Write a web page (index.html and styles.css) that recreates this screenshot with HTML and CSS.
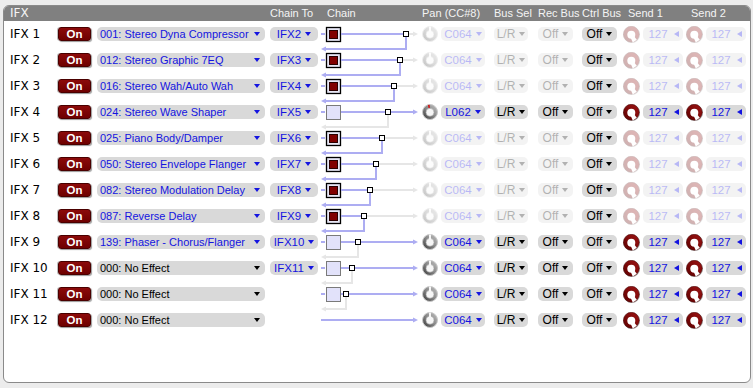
FILE: index.html
```html
<!DOCTYPE html>
<html>
<head>
<meta charset="utf-8">
<link rel="stylesheet" href="styles.css">
</head>
<body>
<svg class="defs" aria-hidden="true">
  <defs>
    <linearGradient id="pg" x1="1" y1="0" x2="0" y2="1">
      <stop offset="0" stop-color="#c4c4c4"/>
      <stop offset="0.5" stop-color="#888"/>
      <stop offset="1" stop-color="#333"/>
    </linearGradient>
    <linearGradient id="rg" x1="1" y1="0" x2="0" y2="1">
      <stop offset="0" stop-color="#a01414"/>
      <stop offset="1" stop-color="#5c0000"/>
    </linearGradient>
    <symbol id="pk" viewBox="0 0 16 16">
      <circle cx="8" cy="8" r="7.5" fill="url(#pg)" stroke="#c8c8c8" stroke-width="1"/>
      <circle cx="8" cy="8.3" r="4" fill="#f6f6f6" stroke="#a0a0a0" stroke-width=".6"/>
      <rect x="7.1" y="0.6" width="1.8" height="4.4" fill="#fff"/>
    </symbol>
    <symbol id="pkL" viewBox="0 0 16 16">
      <circle cx="8" cy="8" r="7.5" fill="url(#pg)" stroke="#c8c8c8" stroke-width="1"/>
      <circle cx="8" cy="8.3" r="4" fill="#f6f6f6" stroke="#a0a0a0" stroke-width=".6"/>
      <rect x="7" y="0.7" width="1.6" height="3.2" fill="#d41010" transform="rotate(-8 8 8)"/>
    </symbol>
    <symbol id="sk" viewBox="0 0 17 17">
      <circle cx="8.9" cy="8.9" r="8.1" fill="#bdbdbd"/>
      <circle cx="8.3" cy="8.3" r="8" fill="url(#rg)" stroke="#3a0000" stroke-width=".5"/>
      <circle cx="8.3" cy="8.7" r="4" fill="#fff"/>
      <path d="M6.8 9.8 L9.8 16.4 L13.8 13.8 L9.8 8.4 Z" fill="#fff"/>
    </symbol>
  </defs>
</svg>

<div class="panel">
  <div class="hdr">
    <span class="h-ifx">IFX</span>
    <span class="h-ct">Chain To</span>
    <span class="h-ch">Chain</span>
    <span class="h-pan">Pan (CC#8)</span>
    <span class="h-bus">Bus Sel</span>
    <span class="h-rec">Rec Bus</span>
    <span class="h-ctl">Ctrl Bus</span>
    <span class="h-s1">Send 1</span>
    <span class="h-s2">Send 2</span>
  </div>

  <!-- IFX 1 -->
  <div class="row">
    <span class="lbl">IFX 1</span>
    <span class="on">On</span>
    <span class="sel fx"><span>001: Stereo Dyna Compressor</span><i class="dn"></i></span>
    <span class="sel ct"><span>IFX2</span><i class="dn"></i></span>
    <svg class="chain" width="100" height="26" viewBox="0 0 100 26">
      <path d="M1 13H5" class="lv"/>
      <rect x="6.5" y="6.5" width="14" height="14" class="bxa"/><rect x="9.5" y="9.5" width="8" height="8" class="rd"/>
      <path d="M21 13H86" class="lv"/>
      <path d="M89 13H94" class="lt"/><path d="M93 10.5L98 13L93 15.5Z" class="ltf"/>
      <path d="M86 16V28H4" class="lv"/><path d="M6 25.5L1 28L6 30.5Z" class="lvf"/>
      <rect x="83.5" y="10.5" width="5" height="5" class="nd"/>
    </svg>
    <svg class="knob dis" viewBox="0 0 16 16"><use href="#pk" width="16" height="16"/></svg>
    <span class="sel pan dis"><span>C064</span><i class="dn"></i></span>
    <span class="sel bk bus dis"><span>L/R</span><i class="dn"></i></span>
    <span class="sel bk off dis"><span>Off</span><i class="dn"></i></span>
    <span class="sel bk off"><span>Off</span><i class="dn"></i></span>
    <svg class="sknob dis" viewBox="0 0 17 17"><use href="#sk" width="17" height="17"/></svg>
    <span class="sel val dis"><span>127</span><i class="lf"></i></span>
    <svg class="sknob dis" viewBox="0 0 17 17"><use href="#sk" width="17" height="17"/></svg>
    <span class="sel val dis"><span>127</span><i class="lf"></i></span>
  </div>

  <!-- IFX 2 -->
  <div class="row">
    <span class="lbl">IFX 2</span>
    <span class="on">On</span>
    <span class="sel fx"><span>012: Stereo Graphic 7EQ</span><i class="dn"></i></span>
    <span class="sel ct"><span>IFX3</span><i class="dn"></i></span>
    <svg class="chain" width="100" height="26" viewBox="0 0 100 26">
      <path d="M1 13H5" class="lv"/>
      <rect x="6.5" y="6.5" width="14" height="14" class="bxa"/><rect x="9.5" y="9.5" width="8" height="8" class="rd"/>
      <path d="M21 13H80" class="lv"/>
      <path d="M83 13H94" class="lt"/><path d="M93 10.5L98 13L93 15.5Z" class="ltf"/>
      <path d="M80 16V28H4" class="lv"/><path d="M6 25.5L1 28L6 30.5Z" class="lvf"/>
      <rect x="77.5" y="10.5" width="5" height="5" class="nd"/>
    </svg>
    <svg class="knob dis" viewBox="0 0 16 16"><use href="#pk" width="16" height="16"/></svg>
    <span class="sel pan dis"><span>C064</span><i class="dn"></i></span>
    <span class="sel bk bus dis"><span>L/R</span><i class="dn"></i></span>
    <span class="sel bk off dis"><span>Off</span><i class="dn"></i></span>
    <span class="sel bk off"><span>Off</span><i class="dn"></i></span>
    <svg class="sknob dis" viewBox="0 0 17 17"><use href="#sk" width="17" height="17"/></svg>
    <span class="sel val dis"><span>127</span><i class="lf"></i></span>
    <svg class="sknob dis" viewBox="0 0 17 17"><use href="#sk" width="17" height="17"/></svg>
    <span class="sel val dis"><span>127</span><i class="lf"></i></span>
  </div>

  <!-- IFX 3 -->
  <div class="row">
    <span class="lbl">IFX 3</span>
    <span class="on">On</span>
    <span class="sel fx"><span>016: Stereo Wah/Auto Wah</span><i class="dn"></i></span>
    <span class="sel ct"><span>IFX4</span><i class="dn"></i></span>
    <svg class="chain" width="100" height="26" viewBox="0 0 100 26">
      <path d="M1 13H5" class="lv"/>
      <rect x="6.5" y="6.5" width="14" height="14" class="bxa"/><rect x="9.5" y="9.5" width="8" height="8" class="rd"/>
      <path d="M21 13H74" class="lv"/>
      <path d="M77 13H94" class="lt"/><path d="M93 10.5L98 13L93 15.5Z" class="ltf"/>
      <path d="M74 16V28H4" class="lv"/><path d="M6 25.5L1 28L6 30.5Z" class="lvf"/>
      <rect x="71.5" y="10.5" width="5" height="5" class="nd"/>
    </svg>
    <svg class="knob dis" viewBox="0 0 16 16"><use href="#pk" width="16" height="16"/></svg>
    <span class="sel pan dis"><span>C064</span><i class="dn"></i></span>
    <span class="sel bk bus dis"><span>L/R</span><i class="dn"></i></span>
    <span class="sel bk off dis"><span>Off</span><i class="dn"></i></span>
    <span class="sel bk off"><span>Off</span><i class="dn"></i></span>
    <svg class="sknob dis" viewBox="0 0 17 17"><use href="#sk" width="17" height="17"/></svg>
    <span class="sel val dis"><span>127</span><i class="lf"></i></span>
    <svg class="sknob dis" viewBox="0 0 17 17"><use href="#sk" width="17" height="17"/></svg>
    <span class="sel val dis"><span>127</span><i class="lf"></i></span>
  </div>

  <!-- IFX 4 -->
  <div class="row">
    <span class="lbl">IFX 4</span>
    <span class="on">On</span>
    <span class="sel fx"><span>024: Stereo Wave Shaper</span><i class="dn"></i></span>
    <span class="sel ct"><span>IFX5</span><i class="dn"></i></span>
    <svg class="chain" width="100" height="26" viewBox="0 0 100 26">
      <path d="M1 13H5" class="lv"/>
      <rect x="6.5" y="6.5" width="14" height="14" class="bxi"/>
      <path d="M68 16V28H4" class="lt"/><path d="M6 25.5L1 28L6 30.5Z" class="ltf"/>
      <path d="M21 13H94" class="lv"/><path d="M93 10.5L98 13L93 15.5Z" class="lvf"/>
      <rect x="65.5" y="10.5" width="5" height="5" class="nd"/>
    </svg>
    <svg class="knob" viewBox="0 0 16 16"><use href="#pkL" width="16" height="16"/></svg>
    <span class="sel pan"><span>L062</span><i class="dn"></i></span>
    <span class="sel bk bus"><span>L/R</span><i class="dn"></i></span>
    <span class="sel bk off"><span>Off</span><i class="dn"></i></span>
    <span class="sel bk off"><span>Off</span><i class="dn"></i></span>
    <svg class="sknob" viewBox="0 0 17 17"><use href="#sk" width="17" height="17"/></svg>
    <span class="sel val"><span>127</span><i class="lf"></i></span>
    <svg class="sknob" viewBox="0 0 17 17"><use href="#sk" width="17" height="17"/></svg>
    <span class="sel val"><span>127</span><i class="lf"></i></span>
  </div>

  <!-- IFX 5 -->
  <div class="row">
    <span class="lbl">IFX 5</span>
    <span class="on">On</span>
    <span class="sel fx"><span>025: Piano Body/Damper</span><i class="dn"></i></span>
    <span class="sel ct"><span>IFX6</span><i class="dn"></i></span>
    <svg class="chain" width="100" height="26" viewBox="0 0 100 26">
      <path d="M1 13H5" class="lv"/>
      <rect x="6.5" y="6.5" width="14" height="14" class="bxa"/><rect x="9.5" y="9.5" width="8" height="8" class="rd"/>
      <path d="M21 13H62" class="lv"/>
      <path d="M65 13H94" class="lt"/><path d="M93 10.5L98 13L93 15.5Z" class="ltf"/>
      <path d="M62 16V28H4" class="lv"/><path d="M6 25.5L1 28L6 30.5Z" class="lvf"/>
      <rect x="59.5" y="10.5" width="5" height="5" class="nd"/>
    </svg>
    <svg class="knob dis" viewBox="0 0 16 16"><use href="#pk" width="16" height="16"/></svg>
    <span class="sel pan dis"><span>C064</span><i class="dn"></i></span>
    <span class="sel bk bus dis"><span>L/R</span><i class="dn"></i></span>
    <span class="sel bk off dis"><span>Off</span><i class="dn"></i></span>
    <span class="sel bk off"><span>Off</span><i class="dn"></i></span>
    <svg class="sknob dis" viewBox="0 0 17 17"><use href="#sk" width="17" height="17"/></svg>
    <span class="sel val dis"><span>127</span><i class="lf"></i></span>
    <svg class="sknob dis" viewBox="0 0 17 17"><use href="#sk" width="17" height="17"/></svg>
    <span class="sel val dis"><span>127</span><i class="lf"></i></span>
  </div>

  <!-- IFX 6 -->
  <div class="row">
    <span class="lbl">IFX 6</span>
    <span class="on">On</span>
    <span class="sel fx"><span>050: Stereo Envelope Flanger</span><i class="dn"></i></span>
    <span class="sel ct"><span>IFX7</span><i class="dn"></i></span>
    <svg class="chain" width="100" height="26" viewBox="0 0 100 26">
      <path d="M1 13H5" class="lv"/>
      <rect x="6.5" y="6.5" width="14" height="14" class="bxa"/><rect x="9.5" y="9.5" width="8" height="8" class="rd"/>
      <path d="M21 13H56" class="lv"/>
      <path d="M59 13H94" class="lt"/><path d="M93 10.5L98 13L93 15.5Z" class="ltf"/>
      <path d="M56 16V28H4" class="lv"/><path d="M6 25.5L1 28L6 30.5Z" class="lvf"/>
      <rect x="53.5" y="10.5" width="5" height="5" class="nd"/>
    </svg>
    <svg class="knob dis" viewBox="0 0 16 16"><use href="#pk" width="16" height="16"/></svg>
    <span class="sel pan dis"><span>C064</span><i class="dn"></i></span>
    <span class="sel bk bus dis"><span>L/R</span><i class="dn"></i></span>
    <span class="sel bk off dis"><span>Off</span><i class="dn"></i></span>
    <span class="sel bk off"><span>Off</span><i class="dn"></i></span>
    <svg class="sknob dis" viewBox="0 0 17 17"><use href="#sk" width="17" height="17"/></svg>
    <span class="sel val dis"><span>127</span><i class="lf"></i></span>
    <svg class="sknob dis" viewBox="0 0 17 17"><use href="#sk" width="17" height="17"/></svg>
    <span class="sel val dis"><span>127</span><i class="lf"></i></span>
  </div>

  <!-- IFX 7 -->
  <div class="row">
    <span class="lbl">IFX 7</span>
    <span class="on">On</span>
    <span class="sel fx"><span>082: Stereo Modulation Delay</span><i class="dn"></i></span>
    <span class="sel ct"><span>IFX8</span><i class="dn"></i></span>
    <svg class="chain" width="100" height="26" viewBox="0 0 100 26">
      <path d="M1 13H5" class="lv"/>
      <rect x="6.5" y="6.5" width="14" height="14" class="bxa"/><rect x="9.5" y="9.5" width="8" height="8" class="rd"/>
      <path d="M21 13H50" class="lv"/>
      <path d="M53 13H94" class="lt"/><path d="M93 10.5L98 13L93 15.5Z" class="ltf"/>
      <path d="M50 16V28H4" class="lv"/><path d="M6 25.5L1 28L6 30.5Z" class="lvf"/>
      <rect x="47.5" y="10.5" width="5" height="5" class="nd"/>
    </svg>
    <svg class="knob dis" viewBox="0 0 16 16"><use href="#pk" width="16" height="16"/></svg>
    <span class="sel pan dis"><span>C064</span><i class="dn"></i></span>
    <span class="sel bk bus dis"><span>L/R</span><i class="dn"></i></span>
    <span class="sel bk off dis"><span>Off</span><i class="dn"></i></span>
    <span class="sel bk off"><span>Off</span><i class="dn"></i></span>
    <svg class="sknob dis" viewBox="0 0 17 17"><use href="#sk" width="17" height="17"/></svg>
    <span class="sel val dis"><span>127</span><i class="lf"></i></span>
    <svg class="sknob dis" viewBox="0 0 17 17"><use href="#sk" width="17" height="17"/></svg>
    <span class="sel val dis"><span>127</span><i class="lf"></i></span>
  </div>

  <!-- IFX 8 -->
  <div class="row">
    <span class="lbl">IFX 8</span>
    <span class="on">On</span>
    <span class="sel fx"><span>087: Reverse Delay</span><i class="dn"></i></span>
    <span class="sel ct"><span>IFX9</span><i class="dn"></i></span>
    <svg class="chain" width="100" height="26" viewBox="0 0 100 26">
      <path d="M1 13H5" class="lv"/>
      <rect x="6.5" y="6.5" width="14" height="14" class="bxa"/><rect x="9.5" y="9.5" width="8" height="8" class="rd"/>
      <path d="M21 13H44" class="lv"/>
      <path d="M47 13H94" class="lt"/><path d="M93 10.5L98 13L93 15.5Z" class="ltf"/>
      <path d="M44 16V28H4" class="lv"/><path d="M6 25.5L1 28L6 30.5Z" class="lvf"/>
      <rect x="41.5" y="10.5" width="5" height="5" class="nd"/>
    </svg>
    <svg class="knob dis" viewBox="0 0 16 16"><use href="#pk" width="16" height="16"/></svg>
    <span class="sel pan dis"><span>C064</span><i class="dn"></i></span>
    <span class="sel bk bus dis"><span>L/R</span><i class="dn"></i></span>
    <span class="sel bk off dis"><span>Off</span><i class="dn"></i></span>
    <span class="sel bk off"><span>Off</span><i class="dn"></i></span>
    <svg class="sknob dis" viewBox="0 0 17 17"><use href="#sk" width="17" height="17"/></svg>
    <span class="sel val dis"><span>127</span><i class="lf"></i></span>
    <svg class="sknob dis" viewBox="0 0 17 17"><use href="#sk" width="17" height="17"/></svg>
    <span class="sel val dis"><span>127</span><i class="lf"></i></span>
  </div>

  <!-- IFX 9 -->
  <div class="row">
    <span class="lbl">IFX 9</span>
    <span class="on">On</span>
    <span class="sel fx"><span>139: Phaser - Chorus/Flanger</span><i class="dn"></i></span>
    <span class="sel ct"><span>IFX10</span><i class="dn"></i></span>
    <svg class="chain" width="100" height="26" viewBox="0 0 100 26">
      <path d="M1 13H5" class="lv"/>
      <rect x="6.5" y="6.5" width="14" height="14" class="bxi"/>
      <path d="M38 16V28H4" class="lt"/><path d="M6 25.5L1 28L6 30.5Z" class="ltf"/>
      <path d="M21 13H94" class="lv"/><path d="M93 10.5L98 13L93 15.5Z" class="lvf"/>
      <rect x="35.5" y="10.5" width="5" height="5" class="nd"/>
    </svg>
    <svg class="knob" viewBox="0 0 16 16"><use href="#pk" width="16" height="16"/></svg>
    <span class="sel pan"><span>C064</span><i class="dn"></i></span>
    <span class="sel bk bus"><span>L/R</span><i class="dn"></i></span>
    <span class="sel bk off"><span>Off</span><i class="dn"></i></span>
    <span class="sel bk off"><span>Off</span><i class="dn"></i></span>
    <svg class="sknob" viewBox="0 0 17 17"><use href="#sk" width="17" height="17"/></svg>
    <span class="sel val"><span>127</span><i class="lf"></i></span>
    <svg class="sknob" viewBox="0 0 17 17"><use href="#sk" width="17" height="17"/></svg>
    <span class="sel val"><span>127</span><i class="lf"></i></span>
  </div>

  <!-- IFX 10 -->
  <div class="row">
    <span class="lbl">IFX 10</span>
    <span class="on">On</span>
    <span class="sel fx bk"><span>000: No Effect</span><i class="dn"></i></span>
    <span class="sel ct"><span>IFX11</span><i class="dn"></i></span>
    <svg class="chain" width="100" height="26" viewBox="0 0 100 26">
      <path d="M1 13H5" class="lv"/>
      <rect x="6.5" y="6.5" width="14" height="14" class="bxi"/>
      <path d="M32 16V28H4" class="lt"/><path d="M6 25.5L1 28L6 30.5Z" class="ltf"/>
      <path d="M21 13H94" class="lv"/><path d="M93 10.5L98 13L93 15.5Z" class="lvf"/>
      <rect x="29.5" y="10.5" width="5" height="5" class="nd"/>
    </svg>
    <svg class="knob" viewBox="0 0 16 16"><use href="#pk" width="16" height="16"/></svg>
    <span class="sel pan"><span>C064</span><i class="dn"></i></span>
    <span class="sel bk bus"><span>L/R</span><i class="dn"></i></span>
    <span class="sel bk off"><span>Off</span><i class="dn"></i></span>
    <span class="sel bk off"><span>Off</span><i class="dn"></i></span>
    <svg class="sknob" viewBox="0 0 17 17"><use href="#sk" width="17" height="17"/></svg>
    <span class="sel val"><span>127</span><i class="lf"></i></span>
    <svg class="sknob" viewBox="0 0 17 17"><use href="#sk" width="17" height="17"/></svg>
    <span class="sel val"><span>127</span><i class="lf"></i></span>
  </div>

  <!-- IFX 11 -->
  <div class="row">
    <span class="lbl">IFX 11</span>
    <span class="on">On</span>
    <span class="sel fx bk"><span>000: No Effect</span><i class="dn"></i></span>
    <span></span>
    <svg class="chain" width="100" height="26" viewBox="0 0 100 26">
      <path d="M1 13H5" class="lv"/>
      <rect x="6.5" y="6.5" width="14" height="14" class="bxi"/>
      <path d="M26 16V28H4" class="lt"/><path d="M6 25.5L1 28L6 30.5Z" class="ltf"/>
      <path d="M21 13H94" class="lv"/><path d="M93 10.5L98 13L93 15.5Z" class="lvf"/>
      <rect x="23.5" y="10.5" width="5" height="5" class="nd"/>
    </svg>
    <svg class="knob" viewBox="0 0 16 16"><use href="#pk" width="16" height="16"/></svg>
    <span class="sel pan"><span>C064</span><i class="dn"></i></span>
    <span class="sel bk bus"><span>L/R</span><i class="dn"></i></span>
    <span class="sel bk off"><span>Off</span><i class="dn"></i></span>
    <span class="sel bk off"><span>Off</span><i class="dn"></i></span>
    <svg class="sknob" viewBox="0 0 17 17"><use href="#sk" width="17" height="17"/></svg>
    <span class="sel val"><span>127</span><i class="lf"></i></span>
    <svg class="sknob" viewBox="0 0 17 17"><use href="#sk" width="17" height="17"/></svg>
    <span class="sel val"><span>127</span><i class="lf"></i></span>
  </div>

  <!-- IFX 12 -->
  <div class="row">
    <span class="lbl">IFX 12</span>
    <span class="on">On</span>
    <span class="sel fx bk"><span>000: No Effect</span><i class="dn"></i></span>
    <span></span>
    <svg class="chain" width="100" height="26" viewBox="0 0 100 26">
      <path d="M1 13H94" class="lv"/><path d="M93 10.5L98 13L93 15.5Z" class="lvf"/>
    </svg>
    <svg class="knob" viewBox="0 0 16 16"><use href="#pk" width="16" height="16"/></svg>
    <span class="sel pan"><span>C064</span><i class="dn"></i></span>
    <span class="sel bk bus"><span>L/R</span><i class="dn"></i></span>
    <span class="sel bk off"><span>Off</span><i class="dn"></i></span>
    <span class="sel bk off"><span>Off</span><i class="dn"></i></span>
    <svg class="sknob" viewBox="0 0 17 17"><use href="#sk" width="17" height="17"/></svg>
    <span class="sel val"><span>127</span><i class="lf"></i></span>
    <svg class="sknob" viewBox="0 0 17 17"><use href="#sk" width="17" height="17"/></svg>
    <span class="sel val"><span>127</span><i class="lf"></i></span>
  </div>
</div>
</body>
</html>
```

FILE: styles.css
```css
html, body {
  margin: 0;
  padding: 0;
  background: #ececec;
}

body {
  font-family: "Liberation Sans", Arial, sans-serif;
  font-size: 11px;
  padding: 5px 0 0 3px;
}

.defs {
  position: absolute;
  width: 0;
  height: 0;
  overflow: hidden;
}

.panel {
  width: 746px;
  height: 376px;
  border: 1px solid #8a8a8a;
  border-radius: 6px;
  background: #fff;
  overflow: hidden;
}

.hdr,
.row {
  display: grid;
  grid-template-columns: 48px 39px 173px 50px 102px 19px 53px 44px 44px 41px 20px 43px 20px 44px;
  padding-left: 6px;
  align-items: center;
}

.hdr {
  height: 15px;
  background: #808080;
  color: #f4f4f4;
  font-size: 11px;
  line-height: 15px;
  white-space: nowrap;
}

.h-ifx { grid-column: 1 / 4; font-family: "DejaVu Sans", sans-serif; font-size: 12px; }
.h-ct { grid-column: 4; }
.h-ch { grid-column: 5; padding-left: 7px; }
.h-pan { grid-column: 6 / 8; }
.h-bus { grid-column: 8; }
.h-rec { grid-column: 9; }
.h-ctl { grid-column: 10; }
.h-s1 { grid-column: 11 / 13; padding-left: 5px; }
.h-s2 { grid-column: 13 / 15; padding-left: 5px; }

.row {
  height: 26px;
}

.lbl {
  font-family: "DejaVu Sans", sans-serif;
  font-size: 12px;
  color: #000;
  white-space: nowrap;
}

.on {
  display: flex;
  align-items: center;
  justify-content: center;
  width: 33px;
  height: 14px;
  box-sizing: border-box;
  background: linear-gradient(#8c0a0a, #6e0000);
  border: 1px solid #4a0000;
  border-radius: 3px;
  box-shadow: 1px 1px 1px #9a9a9a, -1px 0 0 #bdbdbd;
  color: #fff;
  font-weight: bold;
  font-size: 11.5px;
  line-height: 12px;
}

.sel {
  display: flex;
  align-items: center;
  height: 14px;
  box-sizing: border-box;
  background: #d9d9d9;
  border-radius: 5px;
  color: #1414e0;
  font-size: 11px;
  line-height: 14px;
  white-space: nowrap;
}

.sel.bk { color: #000; }

.sel.fx {
  width: 168px;
  padding: 0 5px 0 3px;
  justify-content: space-between;
}

.sel.ct {
  width: 48px;
  justify-content: center;
  gap: 4px;
  font-size: 11.5px;
}

.sel.pan {
  width: 44px;
  justify-content: center;
  gap: 4px;
  font-size: 11.5px;
}

.sel.bus {
  width: 34px;
  justify-content: center;
  gap: 4px;
  font-size: 12px;
}

.sel.off {
  width: 35px;
  justify-content: center;
  gap: 4px;
  font-size: 12px;
}

.sel.val {
  width: 40px;
  justify-content: center;
  gap: 6px;
  font-size: 11.5px;
  padding-left: 1px;
}

.dn {
  display: block;
  width: 0;
  height: 0;
  border-left: 3px solid transparent;
  border-right: 3px solid transparent;
  border-top: 4px solid currentColor;
}

.lf {
  display: block;
  width: 0;
  height: 0;
  border-top: 3px solid transparent;
  border-bottom: 3px solid transparent;
  border-right: 5px solid currentColor;
}

.dis { opacity: 0.3; }

.chain {
  display: block;
  overflow: visible;
}

.lv { stroke: #adadf2; stroke-width: 2; fill: none; }
.lt { stroke: #e6e6e6; stroke-width: 2; fill: none; }
.lvf { fill: #adadf2; }
.ltf { fill: #e6e6e6; }
.nd { fill: #fff; stroke: #000; stroke-width: 1; }
.bxa { fill: #e6e6f4; stroke: #000; stroke-width: 1.3; }
.bxi { fill: #e2e2fa; stroke: #7a7a7a; stroke-width: 1; }
.rd { fill: #800000; stroke: #2a0000; stroke-width: 1; }

.knob {
  display: block;
  width: 16px;
  height: 16px;
}

.sknob {
  display: block;
  width: 17px;
  height: 17px;
}
```
